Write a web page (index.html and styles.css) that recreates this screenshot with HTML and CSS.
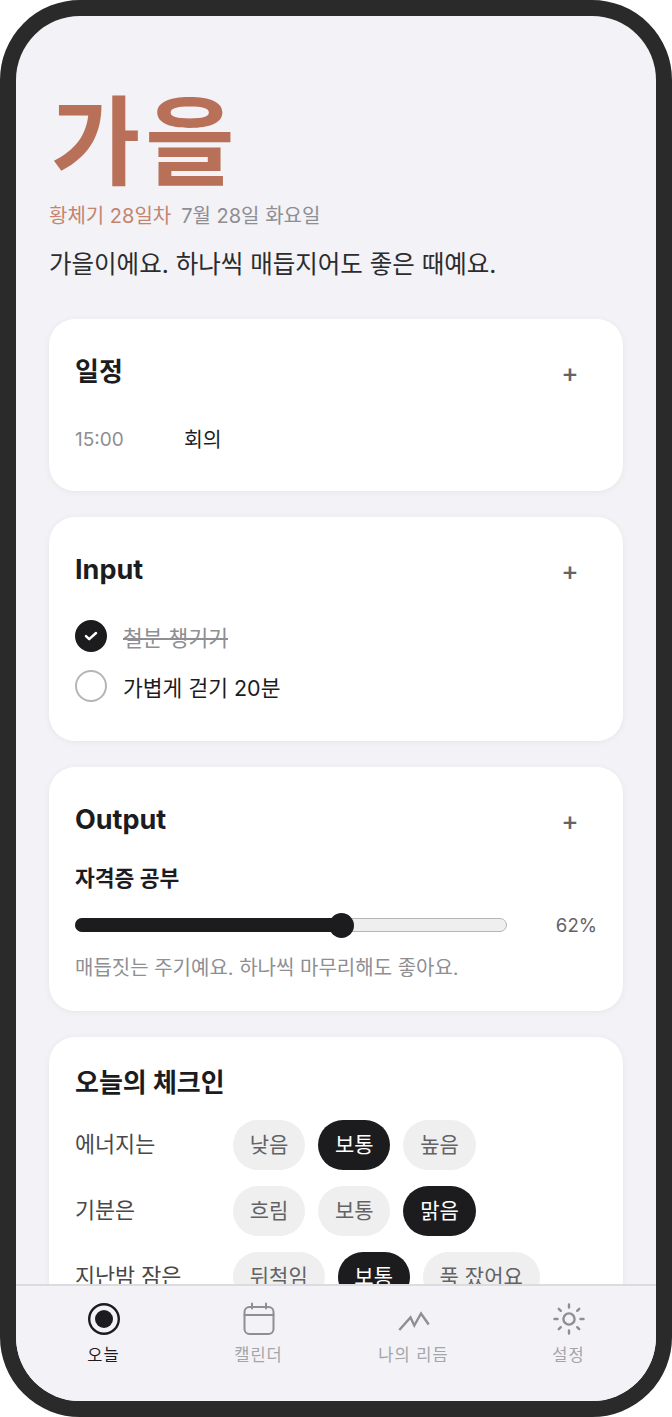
FILE: index.html
```html
<!DOCTYPE html>
<html lang="ko">
<head>
  <meta charset="UTF-8">
  <meta name="viewport" content="width=device-width, initial-scale=1.0">
  <title>오늘</title>
  <link rel="stylesheet" href="styles.css">
</head>
<body>
  <div class="phone">
    <div class="screen">
      <main class="content">
        <header class="hero">
          <h1 class="season">가을</h1>
          <div class="date-row">
            <span class="phase">황체기 28일차</span>
            <span class="date">7월 28일 화요일</span>
          </div>
          <p class="hero-text">가을이에요. 하나씩 매듭지어도 좋은 때예요.</p>
        </header>

        <section class="card card-schedule">
          <div class="card-head">
            <h2>일정</h2>
            <span class="add">+</span>
          </div>
          <div class="schedule-row">
            <span class="time">15:00</span>
            <span class="schedule-name">회의</span>
          </div>
        </section>

        <section class="card card-input">
          <div class="card-head">
            <h2>Input</h2>
            <span class="add">+</span>
          </div>
          <ul class="todo-list">
            <li class="todo done">
              <span class="check">
                <svg width="14" height="14" viewBox="0 0 14 14"><path d="M2 7.2l3.2 3L12 4" fill="none" stroke="#fff" stroke-width="2.5" stroke-linecap="round" stroke-linejoin="round"/></svg>
              </span>
              <span class="todo-text">철분 챙기기</span>
            </li>
            <li class="todo">
              <span class="check"></span>
              <span class="todo-text">가볍게 걷기 20분</span>
            </li>
          </ul>
        </section>

        <section class="card card-output">
          <div class="card-head">
            <h2>Output</h2>
            <span class="add">+</span>
          </div>
          <h3 class="goal-name">자격증 공부</h3>
          <div class="goal-row">
            <div class="track">
              <div class="fill" style="width: 62%"><span class="thumb"></span></div>
            </div>
            <span class="percent">62%</span>
          </div>
          <p class="goal-note">매듭짓는 주기예요. 하나씩 마무리해도 좋아요.</p>
        </section>

        <section class="card card-checkin">
          <h2>오늘의 체크인</h2>
          <div class="checkin-row">
            <span class="checkin-label">에너지는</span>
            <div class="chips">
              <span class="chip">낮음</span>
              <span class="chip on">보통</span>
              <span class="chip">높음</span>
            </div>
          </div>
          <div class="checkin-row">
            <span class="checkin-label">기분은</span>
            <div class="chips">
              <span class="chip">흐림</span>
              <span class="chip">보통</span>
              <span class="chip on">맑음</span>
            </div>
          </div>
          <div class="checkin-row">
            <span class="checkin-label">지난밤 잠은</span>
            <div class="chips">
              <span class="chip">뒤척임</span>
              <span class="chip on">보통</span>
              <span class="chip">푹 잤어요</span>
            </div>
          </div>
        </section>
      </main>

      <nav class="tabbar">
        <div class="tab active">
          <svg width="34" height="34" viewBox="0 0 34 34"><circle cx="17" cy="17" r="14.800" fill="none" stroke="#1c1c1e" stroke-width="2.400"/><circle cx="17" cy="17" r="9" fill="#1c1c1e"/></svg>
          <span>오늘</span>
        </div>
        <div class="tab">
          <svg width="34" height="34" viewBox="0 0 34 34" fill="none" stroke="#8e8e93" stroke-width="2" stroke-linecap="round"><rect x="2.500" y="5" width="29" height="27" rx="5"/><path d="M2.500 13h29M10 1.500v5M24 1.500v5"/></svg>
          <span>캘린더</span>
        </div>
        <div class="tab">
          <svg width="34" height="34" viewBox="0 0 34 34" fill="none" stroke="#8e8e93" stroke-width="2.400"><path d="M2.300 28l11.200-12.500 3.800 8L24 11.500l7.700 11"/></svg>
          <span>나의 리듬</span>
        </div>
        <div class="tab">
          <svg width="34" height="34" viewBox="0 0 34 34" fill="none" stroke="#8e8e93" stroke-width="2.400" stroke-linecap="round"><circle cx="17" cy="17" r="5.600"/><path d="M17 2.500v3M17 28.500v3M2.500 17h3M28.500 17h3M6.800 6.800l2 2M25.200 25.200l2 2M6.800 27.200l2-2M25.200 8.800l2-2"/></svg>
          <span>설정</span>
        </div>
      </nav>
    </div>
  </div>
</body>
</html>
```

FILE: styles.css
```css
* {
  box-sizing: border-box;
}
body {
  margin: 0;
  background: #fff;
  font-family: Inter, "Noto Sans CJK KR", sans-serif;
  color: #1c1c1e;
}
h1, h2, h3, p, ul {
  margin: 0;
  padding: 0;
}
.phone {
  width: 672px;
  height: 1417px;
  border: 16px solid #2a2a2a;
  border-radius: 80px;
  background: #2a2a2a;
}
.screen {
  height: 100%;
  border-radius: 64px;
  background: #f2f2f7;
  overflow: hidden;
  display: flex;
  flex-direction: column;
}
.content {
  flex: 1;
  min-height: 0;
  overflow: hidden;
  padding: 68px 33px 0;
  display: flex;
  flex-direction: column;
  gap: 26px;
}
.hero {
  margin-bottom: 11px;
}
.season {
  font-size: 97px;
  line-height: 116px;
  font-weight: 600;
  letter-spacing: 5px;
  margin-left: 2px;
  color: #b87058;
}
.date-row {
  display: flex;
  gap: 10px;
  font-size: 20px;
  line-height: 30px;
  margin-top: 1px;
}
.phase {
  color: #c4846e;
}
.date {
  color: #8e8e93;
}
.hero-text {
  font-size: 24.500px;
  line-height: 36px;
  margin-top: 15px;
  color: #2c2c2e;
}
.card {
  flex: none;
  background: #fff;
  border-radius: 26px;
  padding: 34px 26px 28px;
  box-shadow: 0 1px 6px rgba(0, 0, 0, 0.06);
}
.card h2 {
  font-size: 26px;
  line-height: 38px;
  margin-bottom: 2px;
  font-weight: 700;
}
.card-input h2,
.card-output h2 {
  font-size: 27px;
}
.card-head {
  display: flex;
  justify-content: space-between;
  align-items: center;
}
.add {
  font-size: 26px;
  font-weight: 500;
  line-height: 40px;
  width: 54px;
  text-align: center;
  color: #636366;
}
.schedule-row {
  display: flex;
  margin-top: 32px;
  margin-bottom: 8px;
  line-height: 30px;
}
.time {
  width: 109px;
  font-size: 19px;
  color: #8e8e93;
}
.schedule-name {
  font-size: 20.500px;
}
.card-input {
  padding-bottom: 30px;
}
.todo-list {
  list-style: none;
  margin-top: 20px;
}
.todo {
  display: flex;
  align-items: center;
  gap: 16px;
  height: 50px;
  font-size: 21.500px;
}
.check {
  width: 32px;
  height: 32px;
  border-radius: 50%;
  border: 2px solid #b5b5b8;
  display: flex;
  align-items: center;
  justify-content: center;
}
.done .check {
  background: #1c1c1e;
  border-color: #1c1c1e;
}
.done .todo-text {
  color: #8e8e93;
  text-decoration: line-through;
}
.goal-name {
  font-size: 21.500px;
  line-height: 30px;
  font-weight: 600;
  margin-top: 22px;
}
.goal-row {
  display: flex;
  align-items: center;
  justify-content: space-between;
  margin-top: 20px;
}
.track {
  width: 432px;
  height: 14px;
  border-radius: 7px;
  border: 1px solid #b5b5b8;
  background: #efefef;
}
.fill {
  position: relative;
  margin: -1px 0 0 -1px;
  height: 14px;
  border-radius: 7px;
  background: #1c1c1e;
}
.thumb {
  position: absolute;
  right: -12px;
  top: -5px;
  width: 25px;
  height: 25px;
  border-radius: 50%;
  background: #1c1c1e;
}
.percent {
  font-size: 18.600px;
  line-height: 24px;
  color: #636366;
}
.goal-note {
  font-size: 20px;
  line-height: 30px;
  color: #8e8e93;
  margin-top: 16px;
}
.card-checkin {
  padding-top: 27px;
}
.checkin-row {
  display: flex;
  align-items: center;
  margin-top: 16px;
}
.card-checkin h2 + .checkin-row {
  margin-top: 18px;
}
.checkin-label {
  width: 158px;
  font-size: 21.800px;
  line-height: 30px;
  padding-bottom: 3px;
  box-sizing: content-box;
  color: #48484a;
}
.chips {
  display: flex;
  gap: 13px;
}
.chip {
  height: 50px;
  line-height: 50px;
  padding: 0 16.800px;
  border-radius: 25px;
  background: #efefef;
  font-size: 21px;
  color: #636366;
}
.chip.on {
  background: #1c1c1e;
  color: #fff;
}
.tabbar {
  flex: none;
  height: 117px;
  border-top: 2px solid #dcdce0;
  background: #f2f2f7;
  display: flex;
  padding: 16px 10px 0;
}
.tab {
  flex: 1;
  display: flex;
  flex-direction: column;
  align-items: center;
  gap: 6px;
  font-size: 16.500px;
  letter-spacing: 1px;
  color: #a5a5a9;
}
.tab.active {
  color: #1c1c1e;
}
```
